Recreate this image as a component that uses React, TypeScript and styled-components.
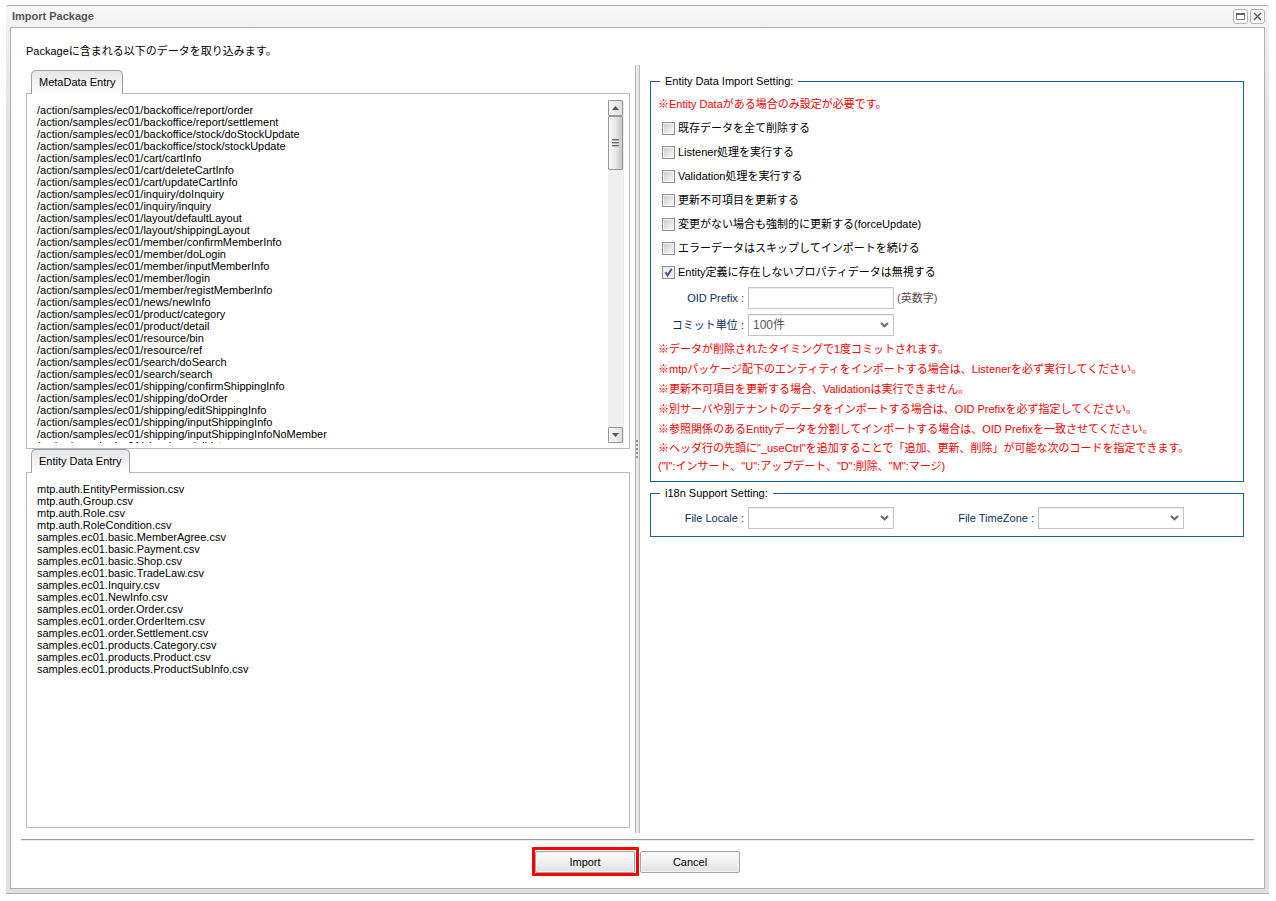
import React, { useRef } from 'react';
import styled, { createGlobalStyle } from 'styled-components';

const GlobalStyle = createGlobalStyle`
  *, *::before, *::after { box-sizing: border-box; }
  body {
    margin: 0;
    background: #fff;
    color: #000;
    font: 11px/14px "Liberation Sans", Arial, "Noto Sans CJK JP", sans-serif;
  }
  button, input, select { font: inherit; color: inherit; }
`;

const Page = styled.div`
  display: flex;
  height: 100vh;
  min-height: 620px;
  padding: 5px 7px 7px 6px;
`;

const Window = styled.section`
  flex: 1;
  min-width: 0;
  display: flex;
  flex-direction: column;
  padding: 0 4px 4px;
  border-top: 1px solid #a8a8a8;
  border-bottom: 1px solid #b0b0b0;
  border-radius: 3px 3px 0 0;
  background: linear-gradient(#fafafa, #f0f0f0 21px, #e1e1e1 120px);
`;

const TitleBar = styled.header`
  display: flex;
  align-items: center;
  gap: 2px;
  height: 21px;
  padding: 0 0 0 2px;
`;

const Title = styled.h1`
  flex: 1;
  margin: 0;
  padding-bottom: 2px;
  font-size: 11px;
  line-height: 14px;
  color: #555;
`;

const TitleButton = styled.button`
  display: flex;
  align-items: center;
  justify-content: center;
  width: 15px;
  height: 15px;
  padding: 0;
  border: 1px solid #b4b4b4;
  border-radius: 3px;
  background: #fafafa;
  color: #555;
`;

const Body = styled.div`
  flex: 1;
  min-height: 0;
  display: flex;
  flex-direction: column;
  padding: 0 10px;
  border: 1px solid #b0b0b0;
  background: #fff;
`;

const Message = styled.p`
  margin: 0;
  padding: 16px 5px 7px;
`;

const Split = styled.div`
  flex: 1;
  min-height: 0;
  display: flex;
`;

const LeftPane = styled.div`
  flex: 1 1 50%;
  min-width: 0;
  display: flex;
  flex-direction: column;
  padding: 5px;
`;

const RightPane = styled.form`
  flex: 1 1 50%;
  min-width: 0;
  display: flex;
  flex-direction: column;
  gap: 4px;
  padding: 9px 10px;
`;

const Splitter = styled.div`
  flex: none;
  display: flex;
  flex-direction: column;
  align-items: center;
  justify-content: center;
  gap: 2px;
  width: 5px;
  border: solid #b8b8b8;
  border-width: 0 1px;
  background: #e8e8e8;
`;

const Grip = styled.span`
  width: 2px;
  height: 2px;
  background: #909090;
`;

const TabSet = styled.section`
  flex: 1;
  min-height: 0;
  display: flex;
  flex-direction: column;
`;

const Tab = styled.h2`
  align-self: flex-start;
  z-index: 1;
  height: 24px;
  margin: 0 0 -1px 5px;
  padding: 4px 7px 0;
  border: 1px solid #93a0b8;
  border-bottom: 0;
  border-radius: 5px 5px 0 0;
  background: linear-gradient(#e6e6e6, #fff);
  font-size: 11px;
  font-weight: normal;
  line-height: 14px;
`;

const TabPane = styled.div`
  flex: 1;
  min-height: 0;
  display: flex;
  padding: 6px 5px 5px;
  border: 1px solid #bababa;
`;

const EntryList = styled.ul`
  flex: 1;
  min-width: 0;
  margin: 0;
  padding: 4px 5px;
  overflow-y: auto;
  scrollbar-width: none;
  list-style: none;
  line-height: 12px;
`;

const ScrollBar = styled.div`
  display: flex;
  flex-direction: column;
  width: 16px;
  background: #efefef;
  border-right: 1px solid #e9e9e9;
`;

const ScrollButton = styled.button`
  display: flex;
  align-items: center;
  justify-content: center;
  width: 15px;
  height: 16px;
  padding: 0;
  border: 1px solid #979797;
  border-radius: 1px;
  background: linear-gradient(90deg, #fafafa, #dcdcdc);
`;

const ScrollTrack = styled.div`
  flex: 1;
`;

const ScrollThumb = styled.div`
  display: flex;
  flex-direction: column;
  align-items: center;
  justify-content: center;
  gap: 1px;
  width: 15px;
  height: 54px;
  border: 1px solid #979797;
  border-radius: 1px;
  background: linear-gradient(90deg, #fafafa, #e8e8e8 50%, #c4c8cc);
`;

const ThumbLine = styled.span`
  width: 7px;
  height: 2px;
  background: linear-gradient(#666 50%, #bbb 50%);
`;

const Fieldset = styled.fieldset`
  margin: 0;
  padding: 4px 7px 6px;
  min-width: 0;
  border: 1px solid #1b5e9e;
`;

const Legend = styled.legend`
  margin-left: 2px;
  padding: 0 5px;
  line-height: 14px;
`;

const Note = styled.p<{ $row?: number }>`
  margin: 0;
  line-height: ${p => p.$row ?? 20}px;
  color: #f00;
`;

const CheckRow = styled.div`
  display: flex;
  align-items: center;
  gap: 3px;
  height: 24px;
  padding-left: 4px;
`;

const CheckBox = styled.input`
  appearance: none;
  width: 13px;
  height: 13px;
  margin: 0;
  border: 1px solid #8e8f8f;
  background: linear-gradient(135deg, #cdd2d8, #f4f5f6) content-box, #f6f6f6;
  padding: 1px;

  &:checked {
    padding: 0;
    background: url("data:image/svg+xml,%3Csvg xmlns='http://www.w3.org/2000/svg' viewBox='0 0 11 11'%3E%3Cpath d='M2.4 5.2L4.6 8.4L8.8 1.8' fill='none' stroke='%23405a96' stroke-width='2'/%3E%3C/svg%3E") #eceef1;
  }
`;

const Fields = styled.div`
  display: flex;
  flex-direction: column;
  gap: 5px;
  padding: 3px 0;
`;

const FieldRow = styled.div`
  display: flex;
  padding: 3px 0 1px;
`;

const Field = styled.div`
  flex: none;
  display: flex;
  align-items: center;
  width: 290px;
`;

const FieldLabel = styled.label`
  width: 90px;
  padding-right: 4px;
  text-align: right;
  white-space: nowrap;
  color: #0a3261;
`;

const TextBox = styled.input`
  width: 146px;
  height: 22px;
  padding: 0 4px;
  border: 1px solid #c4c4c4;
  background: #fff;
  box-shadow: inset 0 1px 1px #eee;
`;

const SelectWrap = styled.span`
  display: grid;
  align-items: center;
  width: 146px;

  > * { grid-area: 1 / 1; }
  > svg { justify-self: end; margin-right: 5px; pointer-events: none; }
`;

const Select = styled.select`
  appearance: none;
  width: 100%;
  height: 22px;
  padding: 0 20px 0 4px;
  border: 1px solid #c4c4c4;
  border-radius: 0;
  background: #fff;
  box-shadow: inset 0 1px 1px #eee;
  font-size: 12px;
  color: #555;
`;

const Hint = styled.span`
  padding-left: 3px;
  color: #5f4650;
`;

const Footer = styled.footer`
  display: flex;
  justify-content: center;
  gap: 5px;
  height: 49px;
  margin-top: 6px;
  padding-top: 11px;
  border-top: 1px solid #999;
  box-shadow: inset 0 1px #ececec;
`;

const ActionButton = styled.button<{ $marked?: boolean }>`
  position: relative;
  width: 100px;
  height: 22px;
  padding: 0;
  border: 1px solid #a4a4a4;
  border-radius: 2px;
  background: linear-gradient(#fdfdfd, #e2e2e2);
  box-shadow: inset 0 0 0 1px #f4f4f4;

  &::after {
    content: "";
    display: ${p => (p.$marked ? 'block' : 'none')};
    position: absolute;
    inset: -5px -5px -4px -4px;
    border: 3px solid #f00;
    border-radius: 1px;
    pointer-events: none;
  }
`;

const root = '/action/samples/ec01/';
const metaData = [
  'backoffice/report/order', 'backoffice/report/settlement',
  'backoffice/stock/doStockUpdate', 'backoffice/stock/stockUpdate',
  'cart/cartInfo', 'cart/deleteCartInfo', 'cart/updateCartInfo',
  'inquiry/doInquiry', 'inquiry/inquiry',
  'layout/defaultLayout', 'layout/shippingLayout',
  'member/confirmMemberInfo', 'member/doLogin', 'member/inputMemberInfo',
  'member/login', 'member/registMemberInfo',
  'news/newInfo', 'product/category', 'product/detail',
  'resource/bin', 'resource/ref', 'search/doSearch', 'search/search',
  'shipping/confirmShippingInfo', 'shipping/doOrder', 'shipping/editShippingInfo',
  'shipping/inputShippingInfo', 'shipping/inputShippingInfoNoMember',
  'shop/specialList',
];

const entityData = [
  'mtp.auth.EntityPermission.csv', 'mtp.auth.Group.csv', 'mtp.auth.Role.csv',
  'mtp.auth.RoleCondition.csv', 'samples.ec01.basic.MemberAgree.csv',
  'samples.ec01.basic.Payment.csv', 'samples.ec01.basic.Shop.csv',
  'samples.ec01.basic.TradeLaw.csv', 'samples.ec01.Inquiry.csv',
  'samples.ec01.NewInfo.csv', 'samples.ec01.order.Order.csv',
  'samples.ec01.order.OrderItem.csv', 'samples.ec01.order.Settlement.csv',
  'samples.ec01.products.Category.csv', 'samples.ec01.products.Product.csv',
  'samples.ec01.products.ProductSubInfo.csv',
];

const options = [
  '既存データを全て削除する',
  'Listener処理を実行する',
  'Validation処理を実行する',
  '更新不可項目を更新する',
  '変更がない場合も強制的に更新する(forceUpdate)',
  'エラーデータはスキップしてインポートを続ける',
  'Entity定義に存在しないプロパティデータは無視する',
];

const notes = [
  '※データが削除されたタイミングで1度コミットされます。',
  '※mtpパッケージ配下のエンティティをインポートする場合は、Listenerを必ず実行してください。',
  '※更新不可項目を更新する場合、Validationは実行できません。',
  '※別サーバや別テナントのデータをインポートする場合は、OID Prefixを必ず指定してください。',
  '※参照関係のあるEntityデータを分割してインポートする場合は、OID Prefixを一致させてください。',
];

function SelectField({ id, label, value = '' }: { id: string; label: string; value?: string }) {
  return (
    <Field>
      <FieldLabel htmlFor={id}>{label}</FieldLabel>
      <SelectWrap>
        <Select id={id}><option>{value}</option></Select>
        <svg width="9" height="6" viewBox="0 0 9 6">
          <path d="M1 1L4.5 4.2L8 1" fill="none" stroke="#6e6e6e" strokeWidth="2.2" />
        </svg>
      </SelectWrap>
    </Field>
  );
}

export default function App() {
  const list = useRef<HTMLUListElement>(null);
  const scroll = (dy: number) => list.current?.scrollBy(0, dy);

  return (
    <Page>
      <GlobalStyle />
      <Window>
        <TitleBar>
          <Title>Import Package</Title>
          <TitleButton aria-label="Maximize">
            <svg width="9" height="7" viewBox="0 0 9 7">
              <path d="M.5 .5H8.5V6.5H.5Z" fill="#fff" stroke="#777" />
              <path d="M0 1H9" stroke="#666" strokeWidth="2" />
            </svg>
          </TitleButton>
          <TitleButton aria-label="Close">
            <svg width="9" height="9" viewBox="0 0 9 9">
              <path d="M1 1L8 8M8 1L1 8" stroke="#555" strokeWidth="1.3" />
            </svg>
          </TitleButton>
        </TitleBar>
        <Body>
          <Message>Packageに含まれる以下のデータを取り込みます。</Message>
          <Split>
            <LeftPane>
              <TabSet>
                <Tab>MetaData Entry</Tab>
                <TabPane>
                  <EntryList ref={list}>
                    {metaData.map(name => <li key={name}>{root + name}</li>)}
                  </EntryList>
                  <ScrollBar>
                    <ScrollButton aria-label="Scroll up" onClick={() => scroll(-36)}>
                      <svg width="7" height="4" viewBox="0 0 7 4"><path d="M0 4L3.5 0L7 4Z" fill="#555" /></svg>
                    </ScrollButton>
                    <ScrollTrack>
                      <ScrollThumb><ThumbLine /><ThumbLine /><ThumbLine /></ScrollThumb>
                    </ScrollTrack>
                    <ScrollButton aria-label="Scroll down" onClick={() => scroll(36)}>
                      <svg width="7" height="4" viewBox="0 0 7 4"><path d="M0 0L3.5 4L7 0Z" fill="#555" /></svg>
                    </ScrollButton>
                  </ScrollBar>
                </TabPane>
              </TabSet>
              <TabSet>
                <Tab>Entity Data Entry</Tab>
                <TabPane>
                  <EntryList>
                    {entityData.map(name => <li key={name}>{name}</li>)}
                  </EntryList>
                </TabPane>
              </TabSet>
            </LeftPane>
            <Splitter><Grip /><Grip /><Grip /><Grip /><Grip /></Splitter>
            <RightPane onSubmit={e => e.preventDefault()}>
              <Fieldset>
                <Legend>Entity Data Import Setting:</Legend>
                <Note $row={24}>※Entity Dataがある場合のみ設定が必要です。</Note>
                {options.map((text, i) => (
                  <CheckRow key={text}>
                    <CheckBox type="checkbox" id={`option-${i}`} defaultChecked={i === 6} />
                    <label htmlFor={`option-${i}`}>{text}</label>
                  </CheckRow>
                ))}
                <Fields>
                  <Field>
                    <FieldLabel htmlFor="oid-prefix">OID Prefix :</FieldLabel>
                    <TextBox id="oid-prefix" type="text" />
                    <Hint>(英数字)</Hint>
                  </Field>
                  <SelectField id="commit-unit" label="コミット単位 :" value="100件" />
                </Fields>
                {notes.map(text => <Note key={text}>{text}</Note>)}
                <Note $row={18}>
                  ※ヘッダ行の先頭に"_useCtrl"を追加することで「追加、更新、削除」が可能な次のコードを指定できます。
                  <br />
                  ("I":インサート、"U":アップデート、"D":削除、"M":マージ)
                </Note>
              </Fieldset>
              <Fieldset>
                <Legend>i18n Support Setting:</Legend>
                <FieldRow>
                  <SelectField id="file-locale" label="File Locale :" />
                  <SelectField id="file-timezone" label="File TimeZone :" />
                </FieldRow>
              </Fieldset>
            </RightPane>
          </Split>
          <Footer>
            <ActionButton $marked>Import</ActionButton>
            <ActionButton>Cancel</ActionButton>
          </Footer>
        </Body>
      </Window>
    </Page>
  );
}
